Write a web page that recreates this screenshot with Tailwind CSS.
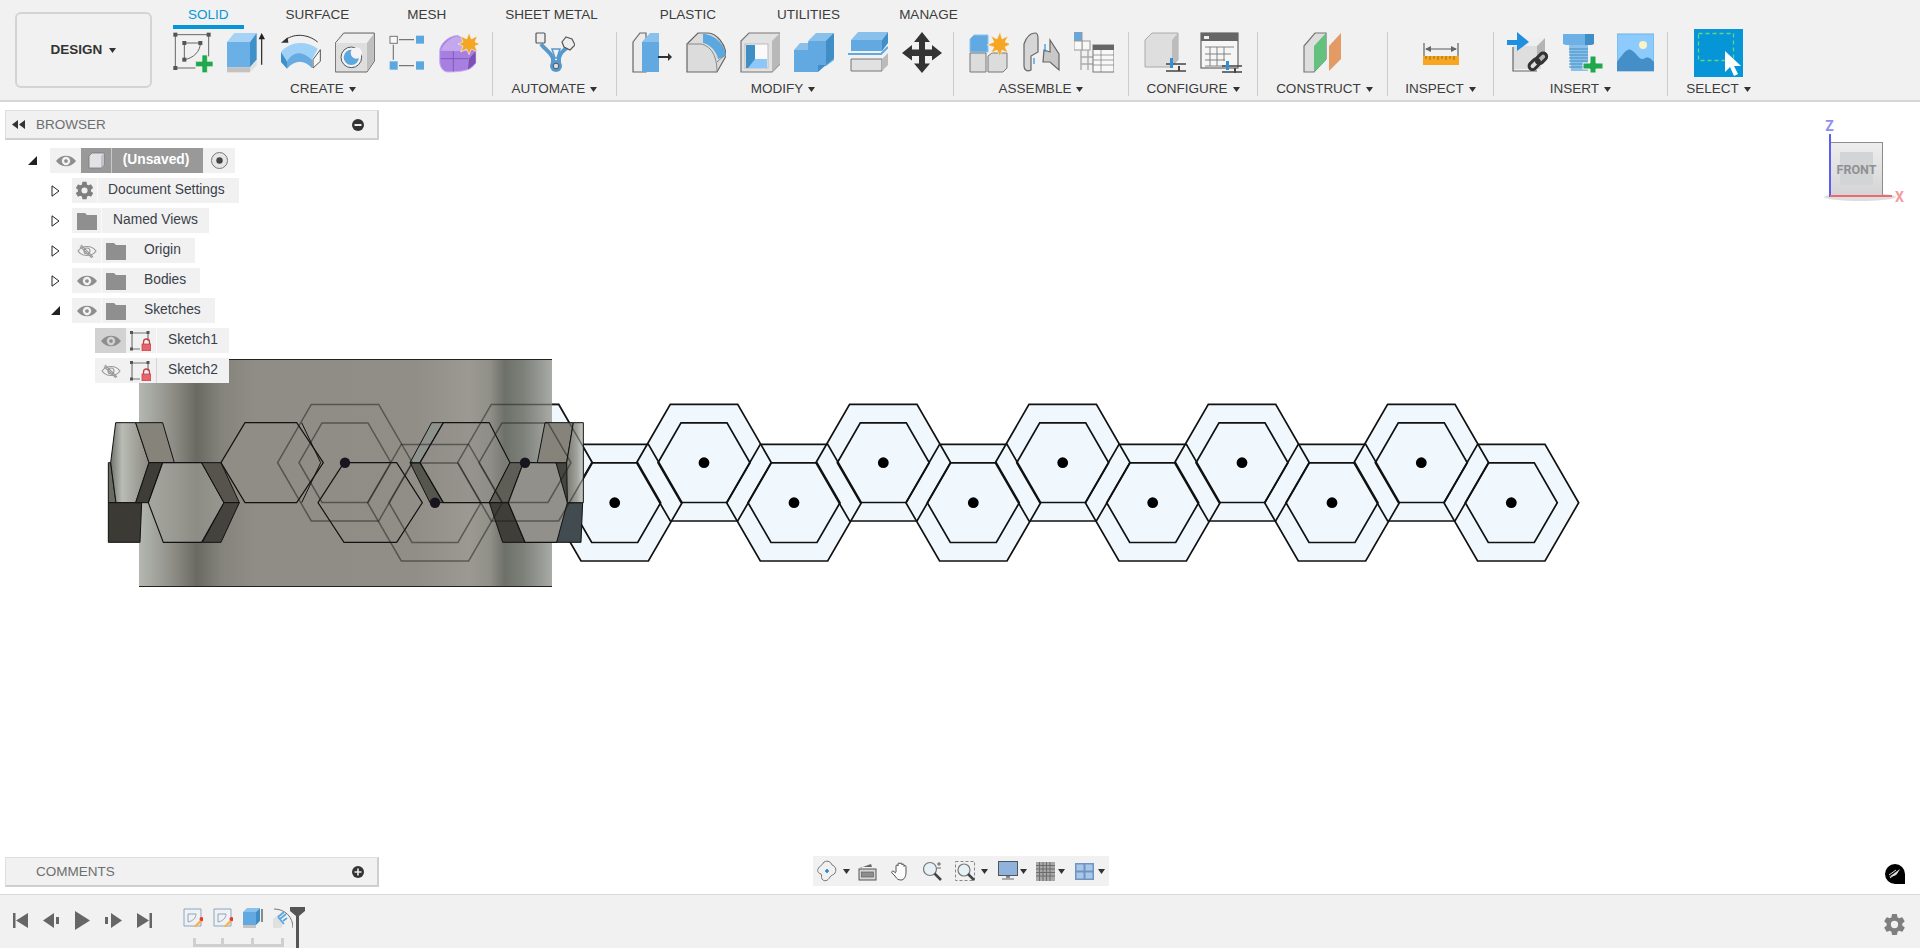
<!DOCTYPE html>
<html>
<head>
<meta charset="utf-8">
<script src="https://cdn.jsdelivr.net/npm/@tailwindcss/browser@4"></script>
</head>
<body class="bg-white overflow-hidden">
<svg width="0" height="0" class="absolute">
  <defs>
    <path id="caret" d="M0 0h7L3.5 5z" fill="#333"/>
    <path id="gear" fill="#7f7f7f" d="M19.4 13c.04-.33.06-.66.06-1s-.02-.67-.06-1l2.11-1.65a.5.5 0 0 0 .12-.64l-2-3.46a.5.5 0 0 0-.61-.22l-2.49 1a7.3 7.3 0 0 0-1.73-1l-.38-2.65A.5.5 0 0 0 14 2h-4a.5.5 0 0 0-.49.42l-.38 2.65c-.62.25-1.2.59-1.73 1l-2.49-1a.5.5 0 0 0-.61.22l-2 3.46a.5.5 0 0 0 .12.64L4.53 11c-.04.33-.06.67-.06 1s.02.67.06 1l-2.11 1.65a.5.5 0 0 0-.12.64l2 3.46c.12.22.39.3.61.22l2.49-1c.53.41 1.11.75 1.73 1l.38 2.65c.04.24.25.42.49.42h4c.24 0 .45-.18.49-.42l.38-2.65c.62-.25 1.2-.59 1.73-1l2.49 1c.22.08.49 0 .61-.22l2-3.46a.5.5 0 0 0-.12-.64ZM12 15.5a3.5 3.5 0 1 1 0-7 3.5 3.5 0 0 1 0 7Z"/>
    <path id="eye" d="M0 7C5 0 15 0 20 7C15 14 5 14 0 7Z M10 2.8a4.2 4.2 0 1 0 .01 0Z M10 5.2a1.8 1.8 0 1 1-.01 0Z" fill="#8e8e8e" fill-rule="evenodd"/>
    <g id="eyeoff" fill="none" stroke="#999" stroke-width="1.1"><path d="M1 7C5 1 15 1 19 7C15 13 5 13 1 7Z"/><circle cx="10" cy="7" r="3"/><path d="M4 1L16 13M3 2.5L15 14"/></g>
    <path id="folder" d="M0 1h8l2 2h10v15H0Z" fill="#8f8f8f"/>
    <g id="sklock"><path d="M2 2h16M2 2v16M2 18h8M18 2v8" fill="none" stroke="#777" stroke-width="1.2"/><rect x="0" y="0" width="3" height="3" fill="#555"/><rect x="16.5" y="0" width="3" height="3" fill="#555"/><rect x="0" y="16.5" width="3" height="3" fill="#555"/><path d="M13.5 13v-2a3 3 0 0 1 6 0v2" fill="none" stroke="#c0404a" stroke-width="1.3"/><rect x="12" y="13" width="9" height="7" fill="#e4656e" stroke="#bc3a45" stroke-width=".7"/></g>
    <polygon id="ho" points="-67.4,0 -33.7,-58.3 33.7,-58.3 67.4,0 33.7,58.3 -33.7,58.3"/>
    <polygon id="hi" points="-46,0 -23,-39.8 23,-39.8 46,0 23,39.8 -23,39.8"/>
    <linearGradient id="bodyg" x1="0" x2="1" y1="0" y2="0">
      <stop offset="0" stop-color="#b4b8b1"/><stop offset=".04" stop-color="#a2a39d"/><stop offset=".08" stop-color="#8f8f88"/><stop offset=".14" stop-color="#6b6a62"/><stop offset=".2" stop-color="#85847c"/><stop offset=".28" stop-color="#8f8d86"/><stop offset=".5" stop-color="#8f8d85"/><stop offset=".67" stop-color="#908e86"/><stop offset=".8" stop-color="#9b9992"/><stop offset=".85" stop-color="#908f88"/><stop offset=".885" stop-color="#6e706a"/><stop offset=".93" stop-color="#7d7f79"/><stop offset="1" stop-color="#a8aba6"/>
    </linearGradient>
    <linearGradient id="lt" x1="0" x2="1" y1="0" y2="0"><stop offset="0" stop-color="#71726c"/><stop offset=".3" stop-color="#b9bcb5"/><stop offset="1" stop-color="#8b8a82"/></linearGradient>
    <linearGradient id="rt" x1="0" x2="1" y1="0" y2="0"><stop offset="0" stop-color="#7b7a72"/><stop offset=".6" stop-color="#9fa29b"/><stop offset="1" stop-color="#c8ccc7"/></linearGradient>
    <linearGradient id="gface" x1="0" x2="0" y1="0" y2="1"><stop offset="0" stop-color="#eeeeee"/><stop offset="1" stop-color="#d4d4d6"/></linearGradient>
    <clipPath id="outside"><rect x="552" y="102" width="1400" height="800"/></clipPath>
  </defs>
</svg>

<div class="flex flex-col h-[948px] w-[1920px] font-['Liberation_Sans',Arial,sans-serif] text-[13.5px] text-[#3c3c3c]">

  <!-- RIBBON -->
  <header class="relative h-[102px] shrink-0 bg-[#f1f1f1] border-b-2 border-[#d6d6d6] flex">
    <div class="w-[159px] shrink-0 pl-[15px] pt-[12px]">
      <button class="w-[137px] h-[76px] rounded-md border-2 border-[#d4d4d4] flex items-center justify-center gap-[7px] font-bold text-[#333]">DESIGN <svg class="w-[7px] h-[5px]"><use href="#caret"/></svg></button>
    </div>
    <div class="flex-1 flex flex-col">
      <nav class="flex h-[32px] shrink-0">
        <a class="mx-[14px] px-[15px] h-[29px] pt-[5px] text-[#0696d7] border-b-[4px] border-[#0696d7]">SOLID</a>
        <a class="ml-[13px] mr-[14px] px-[15px] h-[29px] pt-[5px]">SURFACE</a>
        <a class="mx-[14px] px-[15px] h-[29px] pt-[5px]">MESH</a>
        <a class="ml-[15px] mr-[16px] px-[15px] h-[29px] pt-[5px]">SHEET METAL</a>
        <a class="ml-[16px] mr-[15px] px-[15px] h-[29px] pt-[5px]">PLASTIC</a>
        <a class="ml-[16px] mr-[15px] px-[15px] h-[29px] pt-[5px]">UTILITIES</a>
        <a class="mx-[14px] px-[15px] h-[29px] pt-[5px]">MANAGE</a>
      </nav>
      <div class="flex h-[64px]">

        <!-- CREATE -->
        <section class="w-[333px] flex flex-col items-center">
          <div class="flex gap-[14px] h-[41px]">
            <svg class="w-10 h-[41px]" viewBox="18 12 120 123"><g fill="none" stroke="#666" stroke-width="3"><path d="M25 20H125M25 20V120M25 120H85M125 20V85"/><path d="M52 45H100M52 45V95M52 95C80 90 100 70 100 45" stroke-width="3"/></g><g fill="#555"><rect x="19" y="14" width="12" height="12"/><rect x="119" y="14" width="12" height="12"/><rect x="19" y="114" width="12" height="12"/><rect x="46" y="39" width="12" height="12"/><rect x="94" y="39" width="12" height="12"/><rect x="46" y="89" width="12" height="12"/></g><path d="M86 100H105V81H121V100H138V116H121V134H105V116H86Z" fill="#1fa84d" stroke="#f1f1f1" stroke-width="2"/></svg>
            <svg class="w-10 h-[41px]" viewBox="183 12 120 123"><path d="M183 42H252V118H183Z" fill="#6aafe6"/><path d="M183 42L205 15H272L252 42Z" fill="#a5d2f5"/><path d="M252 42L272 15V95L252 118Z" fill="#3f8fc8"/><path d="M183 118H252V133H183Z" fill="#c2c2c2"/><path d="M252 118L272 95V112L252 133Z" fill="#e0e0e0"/><path d="M287 110V30" stroke="#222" stroke-width="3.5"/><path d="M278 34L287 15L297 34Z" fill="#222"/></svg>
            <svg class="w-10 h-[41px]" viewBox="342 12 120 123"><path d="M342 72C370 38 420 38 452 62L435 95C405 68 380 68 360 100Z" fill="#9dd1f8"/><path d="M360 100C380 68 405 68 435 95V120C410 95 385 95 360 122Z" fill="#66ace2"/><path d="M342 72L360 100V122L342 102Z" fill="#3f8fc6"/><path d="M438 95L460 65V100L438 120Z" fill="#f7f7f7" stroke="#555" stroke-width="3"/><path d="M352 38C378 16 420 16 452 42" fill="none" stroke="#333" stroke-width="3"/><path d="M342 44L362 28L364 44Z" fill="#333"/></svg>
            <svg class="w-10 h-[41px]" viewBox="504 12 120 123"><path d="M505 45L530 15H622V100L600 132H505Z" fill="#dedede" stroke="#666" stroke-width="3"/><path d="M507 45L532 18H620L600 45Z" fill="#efefef"/><path d="M600 45L620 18V100L600 130Z" fill="#bfbfbf"/><circle cx="553" cy="88" r="31" fill="#f4f4f4" stroke="#555" stroke-width="3"/><circle cx="553" cy="88" r="23" fill="#5ba7e0"/><circle cx="568" cy="75" r="17" fill="#f4f4f4"/></svg>
            <svg class="w-9 h-[41px]" viewBox="663 12 108 123"><g stroke="#777" stroke-width="3.5"><path d="M693 35H738M693 113H738M676 50V95"/></g><rect x="666" y="25" width="22" height="21" fill="#f8f8f8" stroke="#777" stroke-width="3"/><rect x="744" y="23" width="24" height="24" fill="#5ba7e0"/><rect x="665" y="100" width="24" height="25" fill="#5ba7e0"/><rect x="744" y="100" width="24" height="25" fill="#5ba7e0"/></svg>
            <svg class="w-10 h-[41px]" viewBox="825 12 120 123"><path d="M827 70C827 50 850 25 880 22L915 40L935 70V105C925 125 900 132 850 132C835 130 827 115 827 100Z" fill="#a77fe0" stroke="#c9b0f0" stroke-width="3"/><path d="M830 68C840 45 860 28 880 25L912 42L915 70Z" fill="#c4a8ee"/><path d="M915 92L935 70V105L912 125Z" fill="#7a52b5"/><path d="M830 92H912M868 70V130" stroke="#7a52b5" stroke-width="2.5"/><path d="M915 14L922 33L940 24L933 42L948 48L933 54L940 72L922 63L915 80L908 63L890 72L897 54L882 48L897 42L890 24L908 33Z" fill="#f5a623" stroke="#f1f1f1" stroke-width="2"/></svg>
          </div>
          <div class="mt-[8px] -ml-[5px] flex items-center gap-[5px] leading-4">CREATE <svg class="w-[7px] h-[5px]"><use href="#caret"/></svg></div>
        </section>

        <!-- AUTOMATE -->
        <section class="w-[124px] border-l border-[#cbcbcb] flex flex-col items-center">
          <div class="flex h-[41px]">
            <svg class="w-10 h-[41px]" viewBox="0 0 40 41"><path d="M6 12C10 18 14 18 18 26V32H24V26C26 18 30 18 34 14" fill="none" stroke="#5799cb" stroke-width="4"/><path d="M17 17h8l-3 9h-2z" fill="#f1f1f1" stroke="#5799cb" stroke-width="1.5"/><circle cx="21" cy="34" r="6" fill="#5799cb"/><circle cx="21" cy="34" r="2.8" fill="#ddd" stroke="#456" stroke-width="1"/><rect x="1" y="1" width="9" height="10" rx="1" fill="#eee" stroke="#555" stroke-width="1.2"/><path d="M31 5l6 2 3 6-5 5-6-3-2-5z" fill="#eee" stroke="#555" stroke-width="1.2"/></svg>
          </div>
          <div class="mt-[8px] flex items-center gap-[5px] leading-4">AUTOMATE <svg class="w-[7px] h-[5px]"><use href="#caret"/></svg></div>
        </section>

        <!-- MODIFY -->
        <section class="w-[337px] border-l border-[#cbcbcb] flex flex-col items-center pl-[3px]">
          <div class="flex gap-[14px] h-[41px]">
            <svg class="w-10 h-[41px]" viewBox="0 0 40 41"><path d="M1 10L8 1h6v39H1Z" fill="#ececec" stroke="#666" stroke-width="1.2"/><path d="M10 10h17v30H10Z" fill="#62a9e2"/><path d="M10 10l8-9h9v9Z" fill="#8ac1ec"/><path d="M26 24h10v-3l4 4-4 4v-3H26z" fill="#333"/></svg>
            <svg class="w-10 h-[41px]" viewBox="0 0 40 41"><path d="M1 12L12 1h10C30 1 40 12 40 24L31 40H1Z" fill="#dcdcdc" stroke="#666" stroke-width="1.2"/><path d="M17 2C28 2 39 12 40 24L32 27C31 20 24 12 17 11Z" fill="#5ba7e0"/><path d="M1 12h14C24 14 31 22 31 40M31 30l9-8" fill="none" stroke="#888" stroke-width="1"/></svg>
            <svg class="w-10 h-[41px]" viewBox="0 0 40 41"><path d="M1 9L9 1h31v31l-8 8H1Z" fill="#e2e2e2" stroke="#777" stroke-width="1.2"/><path d="M32 9l8-8v31l-8 8Z" fill="#b9b9b9"/><rect x="5" y="12" width="23" height="24" fill="#fafafa" stroke="#bbb" stroke-width="1"/><path d="M6 13h9v14H27V36H6Z" fill="#3f8fc6"/><path d="M15 27h12v9H8Z" fill="#8cc7f7"/></svg>
            <svg class="w-10 h-[41px]" viewBox="0 0 40 41"><path d="M0 18h14V10l8-8h18v26l-8 6h-8v6H0Z" fill="#62a9e2"/><path d="M14 9l8-8h18l-8 8Z" fill="#8ac1ec"/><path d="M0 18l6-7h8v7Z" fill="#8ac1ec"/><path d="M32 9l8-8v25l-8 7Z" fill="#3f8fc6"/><path d="M24 33h8l-8 7Z" fill="#3f8fc6"/></svg>
            <svg class="w-10 h-[41px]" viewBox="0 0 40 41"><path d="M3 8h31v11H3Z" fill="#62a9e2"/><path d="M3 8l7-8h30l-6 8Z" fill="#8ac1ec"/><path d="M34 8l6-8v11l-6 8Z" fill="#3f8fc6"/><path d="M0 22h33l7-7" fill="none" stroke="#62a9e2" stroke-width="2.2"/><path d="M3 27h31v12H3Z" fill="#e1e1e1" stroke="#777" stroke-width="1"/><path d="M34 27l6-6v12l-6 6Z" fill="#bbb"/></svg>
            <svg class="w-10 h-[41px]" viewBox="0 0 40 41"><path d="M20 0l8 10h-5v7.5h7V13l10 8-10 7.5V24h-7v7.5h5L20 41l-8-9.5h5V24h-7v4.5L0 21l10-8v4.5h7V10h-5z" fill="#333"/></svg>
          </div>
          <div class="mt-[8px] -ml-[7px] flex items-center gap-[5px] leading-4">MODIFY <svg class="w-[7px] h-[5px]"><use href="#caret"/></svg></div>
        </section>

        <!-- ASSEMBLE -->
        <section class="w-[175px] border-l border-[#cbcbcb] flex flex-col items-center">
          <div class="flex gap-[14px] h-[41px]">
            <svg class="w-10 h-[41px]" viewBox="0 0 40 41"><path d="M1 7L5 3h14v17H1Z" fill="#62a9e2" stroke="#8ac1ec"/><path d="M1 21h16v19H1Z" fill="#dcdcdc" stroke="#777"/><path d="M19 24l4-3h15v15l-4 4H19Z" fill="#dcdcdc" stroke="#777"/><path d="M31 0l2 7 6-3-3 6 6 2-6 3 3 6-6-3-2 7-3-7-6 3 3-6-7-2 7-3-3-6 6 3z" fill="#f5a623" stroke="#f1f1f1" stroke-width=".6"/></svg>
            <svg class="w-[37px] h-[41px]" viewBox="0 0 37 41"><path d="M1 12C3 6 7 1 12 1c2 0 3 2 3 5v14L8 24v14C4 40 1 38 1 34Z" fill="#d6d6d6" stroke="#666" stroke-width="1.2"/><path d="M21 18l6 2V8l9 14v16L27 30H20Z" fill="#c8c8c8" stroke="#666" stroke-width="1.2"/><path d="M11 26v6M22 12v8" stroke="#2f8fd8" stroke-width="1.2"/></svg>
            <svg class="w-10 h-[41px]" viewBox="0 0 40 41"><rect x="0" y="0" width="8" height="9" fill="#62a9e2" stroke="#999"/><rect x="8" y="9" width="8" height="9" fill="#f8f8f8" stroke="#999"/><rect x="0" y="9" width="8" height="9" fill="#f8f8f8" stroke="#999"/><path d="M7 18v20M14 18v20M7 25h13M7 32h13" stroke="#aaa" stroke-width="1.4" fill="none"/><rect x="19" y="13" width="21" height="27" fill="#f8f8f8" stroke="#777"/><rect x="19" y="13" width="21" height="5" fill="#666"/><path d="M19 23h21M19 28h21M19 33h21M27 18v22" stroke="#888" stroke-width=".8"/></svg>
          </div>
          <div class="mt-[8px] flex items-center gap-[5px] leading-4">ASSEMBLE <svg class="w-[7px] h-[5px]"><use href="#caret"/></svg></div>
        </section>

        <!-- CONFIGURE -->
        <section class="w-[129px] border-l border-[#cbcbcb] flex flex-col items-center">
          <div class="flex gap-[14px] h-[41px]">
            <svg class="w-[42px] h-[41px]" viewBox="0 0 42 41"><path d="M1 8L8 1h26v27l-8 7H1Z" fill="#dedede" stroke="#aaa"/><path d="M28 8l6-7v27l-6 7Z" fill="#bcbcbc"/><path d="M22 32h20M22 39h20" stroke="#444" stroke-width="1.6"/><rect x="26" y="26" width="3" height="10" fill="#2f8fd8"/><path d="M35 34v5" stroke="#444" stroke-width="2"/></svg>
            <svg class="w-[42px] h-[41px]" viewBox="0 0 42 41"><rect x="1" y="1" width="37" height="35" fill="#f6f6f6" stroke="#666" stroke-width="1.2"/><rect x="1" y="1" width="37" height="8" fill="#666"/><rect x="4" y="4" width="5" height="3" fill="#eee"/><path d="M5 15h29M5 22h26M5 28h20M5 34h20M10 15v19M17 15v19M24 15v14" stroke="#777" stroke-width=".9" fill="none"/><path d="M22 34h20M22 40h20" stroke="#444" stroke-width="1.6"/><rect x="26" y="29" width="3" height="9" fill="#2f8fd8"/><path d="M35 36v5" stroke="#444" stroke-width="2"/></svg>
          </div>
          <div class="mt-[8px] flex items-center gap-[5px] leading-4">CONFIGURE <svg class="w-[7px] h-[5px]"><use href="#caret"/></svg></div>
        </section>

        <!-- CONSTRUCT -->
        <section class="w-[130px] border-l border-[#cbcbcb] flex flex-col items-center">
          <div class="flex h-[41px]">
            <svg class="w-10 h-[41px]" viewBox="0 0 40 41"><path d="M1 14L12 1h11v26L11 40H1Z" fill="#dedede" stroke="#777" stroke-width="1.2"/><path d="M11 14L23 1v27L11 40Z" fill="#64c17e"/><path d="M26 14L38 1v26L26 39Z" fill="#e49a64"/></svg>
          </div>
          <div class="mt-[8px] ml-[4px] flex items-center gap-[5px] leading-4">CONSTRUCT <svg class="w-[7px] h-[5px]"><use href="#caret"/></svg></div>
        </section>

        <!-- INSPECT -->
        <section class="w-[106px] border-l border-[#cbcbcb] flex flex-col items-center">
          <div class="flex h-[41px]">
            <svg class="w-[36px] h-[41px]" viewBox="0 0 36 41"><path d="M1 11v13M35 11v13" stroke="#555" stroke-width="1.1"/><path d="M3 17h30" stroke="#666" stroke-width="1.1"/><path d="M2 17l6-3v6zM34 17l-6-3v6z" fill="#666"/><rect x="0" y="24" width="36" height="9" fill="#f5a623"/><path d="M3 24v3M7 24v4M11 24v3M15 24v4M19 24v3M23 24v4M27 24v3M31 24v4" stroke="#8a5a10" stroke-width=".8"/></svg>
          </div>
          <div class="mt-[8px] flex items-center gap-[5px] leading-4">INSPECT <svg class="w-[7px] h-[5px]"><use href="#caret"/></svg></div>
        </section>

        <!-- INSERT -->
        <section class="w-[174px] border-l border-[#cbcbcb] flex flex-col items-center">
          <div class="flex gap-[14px] h-[41px]">
            <svg class="w-[42px] h-[41px]" viewBox="0 0 42 41"><path d="M6 13h28v24H6Z" fill="#dedede"/><path d="M6 15v24h24" fill="none" stroke="#666" stroke-width="1.2"/><path d="M14 6h24L30 14H6Z" fill="#efefef"/><path d="M30 14l8-8v22l-8 8Z" fill="#b5b5b5"/><path d="M0 8h10V0l12 10-12 9v-6H0z" fill="#1f90e0"/><g fill="none" stroke="#333" stroke-width="3"><rect x="21" y="29" width="12" height="7" rx="3.5" transform="rotate(-45 27 32)"/><rect x="28" y="23" width="12" height="7" rx="3.5" transform="rotate(-45 34 26)"/></g></svg>
            <svg class="w-10 h-[41px]" viewBox="0 0 40 41"><path d="M0 2h31v10l-3 1H3l-3-1Z" fill="#6cb0e5"/><path d="M22 2h9v10l-3 1h-6Z" fill="#3f8fc6"/><path d="M6 13h19v26H8Z" fill="#8cc0e8"/><path d="M6 17h19M6 20h19M6 23h19M6 26h19M6 29h19M6 32h19M6 35h19" stroke="#3f8fc6" stroke-width="1.1"/><path d="M20 31h7v-7h6v7h7v6h-7v4h-6v-4h-7z" fill="#1fa84d" stroke="#f1f1f1" stroke-width="1"/></svg>
            <svg class="w-[37px] h-[41px]" viewBox="0 0 37 41"><rect width="37" height="37" y="2" fill="#8ccbfb" stroke="#6fb1e3"/><circle cx="26" cy="13" r="4" fill="#fbf4c6"/><path d="M0 30C6 22 10 16 14 18C19 20 22 28 26 27C30 25 32 24 37 30V39H0Z" fill="#458fc9"/></svg>
          </div>
          <div class="mt-[8px] flex items-center gap-[5px] leading-4">INSERT <svg class="w-[7px] h-[5px]"><use href="#caret"/></svg></div>
        </section>

        <!-- SELECT -->
        <section class="w-[102px] border-l border-[#cbcbcb] flex flex-col items-center">
          <div class="flex h-[41px] items-center">
            <svg class="w-[49px] h-[48px] shrink-0" viewBox="0 0 49 48"><rect width="49" height="48" fill="#0696d7"/><rect x="4.5" y="4.5" width="35" height="27" fill="none" stroke="#63d38a" stroke-width="1.3" stroke-dasharray="4 3"/><path d="M31 22v21l5-5 4 9 4-2-4-8h7Z" fill="#fff"/></svg>
          </div>
          <div class="mt-[8px] flex items-center gap-[5px] leading-4">SELECT <svg class="w-[7px] h-[5px]"><use href="#caret"/></svg></div>
        </section>
      </div>
    </div>
  </header>

  <!-- CANVAS -->
  <main class="relative flex-1">
    <svg class="absolute inset-0 w-full h-full" viewBox="0 102 1920 792">
      <!-- blue fills -->
      <g fill="#f0f8fe">
        <use href="#ho" x="525" y="462.7"/><use href="#ho" x="614.7" y="502.7"/><use href="#ho" x="704" y="462.7"/><use href="#ho" x="794" y="502.7"/><use href="#ho" x="883.3" y="462.7"/><use href="#ho" x="973.3" y="502.7"/><use href="#ho" x="1062.7" y="462.7"/><use href="#ho" x="1152.7" y="502.7"/><use href="#ho" x="1242" y="462.7"/><use href="#ho" x="1332" y="502.7"/><use href="#ho" x="1421.3" y="462.7"/><use href="#ho" x="1511.3" y="502.7"/>
      </g>
      <g fill="none" stroke="#111" stroke-width="1.7">
        <use href="#ho" x="614.7" y="502.7"/><use href="#hi" x="614.7" y="502.7"/><use href="#ho" x="704" y="462.7"/><use href="#hi" x="704" y="462.7"/><use href="#ho" x="794" y="502.7"/><use href="#hi" x="794" y="502.7"/><use href="#ho" x="883.3" y="462.7"/><use href="#hi" x="883.3" y="462.7"/><use href="#ho" x="973.3" y="502.7"/><use href="#hi" x="973.3" y="502.7"/><use href="#ho" x="1062.7" y="462.7"/><use href="#hi" x="1062.7" y="462.7"/><use href="#ho" x="1152.7" y="502.7"/><use href="#hi" x="1152.7" y="502.7"/><use href="#ho" x="1242" y="462.7"/><use href="#hi" x="1242" y="462.7"/><use href="#ho" x="1332" y="502.7"/><use href="#hi" x="1332" y="502.7"/><use href="#ho" x="1421.3" y="462.7"/><use href="#hi" x="1421.3" y="462.7"/><use href="#ho" x="1511.3" y="502.7"/><use href="#hi" x="1511.3" y="502.7"/>
        <g clip-path="url(#outside)"><use href="#ho" x="525" y="462.7"/><use href="#hi" x="525" y="462.7"/></g>
      </g>
      <g fill="#000">
        <circle cx="614.7" cy="502.7" r="5.4"/><circle cx="704" cy="462.7" r="5.4"/><circle cx="794" cy="502.7" r="5.4"/><circle cx="883.3" cy="462.7" r="5.4"/><circle cx="973.3" cy="502.7" r="5.4"/><circle cx="1062.7" cy="462.7" r="5.4"/><circle cx="1152.7" cy="502.7" r="5.4"/><circle cx="1242" cy="462.7" r="5.4"/><circle cx="1332" cy="502.7" r="5.4"/><circle cx="1421.3" cy="462.7" r="5.4"/><circle cx="1511.3" cy="502.7" r="5.4"/>
      </g>
      <!-- body -->
      <rect x="139" y="359" width="413" height="228" fill="url(#bodyg)"/>
      <path d="M139 359.5H552M139 586.5H552" stroke="#222" stroke-width="1.2"/>
      <g transform="translate(90 350) scale(.33333)" stroke-linejoin="round">
        <polygon points="55,338 62,338 78,458 55,458" fill="#6a6962" stroke="#111" stroke-width="3"/>
        <polygon points="77,218 137,218 177,338 137,458 78,458 62,338" fill="url(#lt)" stroke="#111" stroke-width="3"/>
        <polygon points="137,218 218,218 253,338 177,338" fill="#86837b" stroke="#111" stroke-width="3"/>
        <polygon points="55,458 155,458 150,577 55,577" fill="#3b3a35" stroke="#111" stroke-width="3"/>
        <polygon points="177,338 218,338 175,458 137,458" fill="#3e3d38" stroke="#111" stroke-width="3"/>
        <polygon points="218,338 335,338 402,458 335,577 220,577 175,458" fill="#a3a39c" fill-opacity=".6" stroke="#111" stroke-width="3.5"/>
        <polygon points="335,338 393,338 448,458 402,458" fill="#56544d" stroke="#111" stroke-width="3"/>
        <polygon points="402,458 448,458 393,577 337,577" fill="#45433d" stroke="#111" stroke-width="3"/>
        <polygon points="465,218 620,218 700,338 620,458 465,458 393,338" fill="#8f8d86" stroke="#111" stroke-width="3.5"/>
        <path d="M635,218 L692,338 L635,458" fill="none" stroke="#111" stroke-width="3"/>
        <polygon points="960,338 990,338 1060,458 1020,458" fill="#55574f" stroke="#111" stroke-width="3"/>
        <polygon points="1025,218 1060,218 990,338 960,338" fill="#8d928c" stroke="#111" stroke-width="3"/>
        <polygon points="1060,218 1198,218 1260,338 1198,458 1060,458 990,338" fill="#8e8d86" fill-opacity=".4" stroke="#111" stroke-width="3.5"/>
        <polygon points="762,338 920,338 997,458 920,577 762,577 684,458" fill="#8f8e87" fill-opacity=".55" stroke="#111" stroke-width="3.5"/>
        <polygon points="1260,338 1300,338 1255,458 1198,458" fill="#5e5d56" stroke="#111" stroke-width="3"/>
        <polygon points="1198,458 1255,458 1305,577 1238,577" fill="#3f3e39" stroke="#111" stroke-width="3"/>
        <polygon points="1300,338 1398,338 1468,458 1400,577 1305,577 1255,458" fill="#92908a" stroke="#111" stroke-width="3.5"/>
        <polygon points="1432,458 1478,458 1473,577 1400,577" fill="#424b4f" stroke="#111" stroke-width="3"/>
        <polygon points="1398,338 1430,338 1450,458 1432,458" fill="#454640" stroke="#111" stroke-width="3"/>
        <polygon points="1365,218 1450,218 1430,338 1342,338" fill="#86837b" stroke="#111" stroke-width="3"/>
        <polygon points="1450,218 1480,218 1480,458 1432,458 1430,338" fill="url(#rt)" stroke="#111" stroke-width="3"/>
      </g>
      <!-- ghost outlines -->
      <g fill="none" stroke="#1c1c1c" stroke-opacity=".5" stroke-width="1.5">
        <use href="#ho" x="345" y="462.7"/><use href="#hi" x="345" y="462.7"/>
        <use href="#ho" x="435" y="502.7"/><use href="#hi" x="435" y="502.7"/>
        <use href="#ho" x="525" y="462.7"/><use href="#hi" x="525" y="462.7"/>
      </g>
      <g fill="#17141e"><circle cx="345" cy="462.7" r="5.2"/><circle cx="435" cy="502.7" r="5.2"/><circle cx="525" cy="462.7" r="5.2"/></g>

      <!-- view cube -->
      <ellipse cx="1860" cy="197" rx="36" ry="4" fill="#000" opacity=".13"/>
      <rect x="1830.5" y="142.5" width="52" height="53" fill="url(#gface)" stroke="#8c8c8c" stroke-width="1"/>
      <rect x="1840" y="152" width="33" height="33" fill="#d3d4d6"/>
      <text x="1856.5" y="174" text-anchor="middle" font-family="Roboto,sans-serif" font-weight="700" font-size="12.5" fill="#8f9093">FRONT</text>
      <path d="M1830 134V197" stroke="#5b5ef0" stroke-width="2"/>
      <path d="M1830 196H1892" stroke="#ea6a72" stroke-width="2.2"/>
      <text x="1829.5" y="131" text-anchor="middle" font-family="Roboto,sans-serif" font-weight="700" font-size="14" fill="#8d8ff5">Z</text>
      <text x="1899.5" y="202" text-anchor="middle" font-family="Roboto,sans-serif" font-weight="700" font-size="14" fill="#f29ba0">X</text>
      <!-- notice badge -->
      <path d="M1895 864a10 10 0 0 1 10 10v10h-10a10 10 0 0 1 0-20Z" fill="#000"/>
      <path d="M1889 877l11-8-1 2-1 1-1 2-1 1-2 1Z" fill="#ddd"/>
      <path d="M1889 875l7-5M1890 878l8-6" stroke="#ddd" stroke-width="1"/>
    </svg>

    <!-- browser panel -->
    <aside class="absolute left-[5px] top-[8px] w-[374px]">
      <div class="h-[30px] bg-[#f1f1f1] border border-[#dedede] border-r-2 border-b-2 border-r-[#cfcfcf] border-b-[#cfcfcf] flex items-center pl-[6px] pr-[13px] text-[#6e6e6e]">
        <svg class="w-[14px] h-[9px] mr-[8px]" viewBox="0 0 14 9"><path d="M0 4.5L6 0v9zM7 4.5L13 0v9z" fill="#333"/></svg>
        <span class="ml-[2px] mt-[2px] flex-1">BROWSER</span>
        <svg class="w-[12px] h-[12px]" viewBox="0 0 12 12"><circle cx="6" cy="6" r="6" fill="#333"/><rect x="2.5" y="5" width="7" height="2" fill="#eee"/></svg>
      </div>
      <ul class="mt-[8px] flex flex-col gap-[5px] text-[#3a3f4a] text-[13.8px]">
        <li class="flex items-center h-[25px]">
          <svg class="w-[9px] h-[9px] ml-[23px] mr-[13px]" viewBox="0 0 9 9"><path d="M9 0v9H0Z" fill="#222"/></svg>
          <div class="flex items-stretch h-full bg-[#f1f1f1]">
            <div class="w-[31px] flex items-center justify-center"><svg class="w-[20px] h-[14px]" viewBox="0 0 20 14"><use href="#eye"/></svg></div>
            <div class="w-[31px] bg-[#999] border-r border-[#c9c9c9] flex items-center justify-center"><svg class="w-[17px] h-[17px]" viewBox="0 0 17 17"><path d="M1 4l3-3h12v12l-3 3H1Z" fill="#e2e2e6" stroke="#777" stroke-width=".8"/><path d="M13 4l3-3v12l-3 3Z" fill="#c2c3c8"/></svg></div>
            <div class="w-[91px] pr-[3px] bg-[#999] flex items-center justify-center text-white font-bold">(Unsaved)</div>
            <div class="w-[32px] flex items-center justify-center"><svg class="w-[17px] h-[17px]" viewBox="0 0 17 17"><circle cx="8.5" cy="8.5" r="8" fill="#e6e6e6" stroke="#777"/><circle cx="8.5" cy="8.5" r="3.2" fill="#444"/></svg></div>
          </div>
        </li>
        <li class="flex items-center h-[25px]">
          <svg class="w-[9px] h-[12px] ml-[46px] mr-[12px]" viewBox="0 0 9 12"><path d="M1 .8L8 6 1 11.2Z" fill="#fff" stroke="#222" stroke-width="1"/></svg>
          <div class="flex items-stretch h-full bg-[#f1f1f1]">
            <div class="w-[26px] border-r border-[#fafafa] flex items-center justify-center"><svg class="w-[21px] h-[21px]" viewBox="0 0 24 24"><use href="#gear"/></svg></div>
            <div class="w-[141px] pl-[10px] flex items-center">Document Settings</div>
          </div>
        </li>
        <li class="flex items-center h-[25px]">
          <svg class="w-[9px] h-[12px] ml-[46px] mr-[12px]" viewBox="0 0 9 12"><path d="M1 .8L8 6 1 11.2Z" fill="#fff" stroke="#222" stroke-width="1"/></svg>
          <div class="flex items-stretch h-full bg-[#f1f1f1]">
            <div class="w-[30px] border-r border-[#fafafa] flex items-center justify-center"><svg class="w-[20px] h-[18px]" viewBox="0 0 20 18"><use href="#folder"/></svg></div>
            <div class="w-[107px] pl-[11px] flex items-center">Named Views</div>
          </div>
        </li>
        <li class="flex items-center h-[25px]">
          <svg class="w-[9px] h-[12px] ml-[46px] mr-[12px]" viewBox="0 0 9 12"><path d="M1 .8L8 6 1 11.2Z" fill="#fff" stroke="#222" stroke-width="1"/></svg>
          <div class="flex items-stretch h-full bg-[#f1f1f1]">
            <div class="w-[30px] border-r border-[#fafafa] flex items-center justify-center"><svg class="w-[20px] h-[14px]" viewBox="0 0 20 14"><use href="#eyeoff"/></svg></div>
            <div class="w-[93px] pl-[4px] flex items-center"><svg class="w-[20px] h-[18px] mr-[18px]" viewBox="0 0 20 18"><use href="#folder"/></svg>Origin</div>
          </div>
        </li>
        <li class="flex items-center h-[25px]">
          <svg class="w-[9px] h-[12px] ml-[46px] mr-[12px]" viewBox="0 0 9 12"><path d="M1 .8L8 6 1 11.2Z" fill="#fff" stroke="#222" stroke-width="1"/></svg>
          <div class="flex items-stretch h-full bg-[#f1f1f1]">
            <div class="w-[30px] border-r border-[#fafafa] flex items-center justify-center"><svg class="w-[20px] h-[14px]" viewBox="0 0 20 14"><use href="#eye"/></svg></div>
            <div class="w-[98px] pl-[4px] flex items-center"><svg class="w-[20px] h-[18px] mr-[18px]" viewBox="0 0 20 18"><use href="#folder"/></svg>Bodies</div>
          </div>
        </li>
        <li class="flex items-center h-[25px]">
          <svg class="w-[9px] h-[9px] ml-[46px] mr-[12px]" viewBox="0 0 9 9"><path d="M9 0v9H0Z" fill="#222"/></svg>
          <div class="flex items-stretch h-full bg-[#f1f1f1]">
            <div class="w-[30px] border-r border-[#fafafa] flex items-center justify-center"><svg class="w-[20px] h-[14px]" viewBox="0 0 20 14"><use href="#eye"/></svg></div>
            <div class="w-[113px] pl-[4px] flex items-center"><svg class="w-[20px] h-[18px] mr-[18px]" viewBox="0 0 20 18"><use href="#folder"/></svg>Sketches</div>
          </div>
        </li>
        <li class="flex items-center h-[25px] pl-[90px]">
          <div class="flex items-stretch h-full bg-[#f1f1f1]">
            <div class="w-[31px] bg-[#d2d2d2] flex items-center justify-center"><svg class="w-[20px] h-[14px]" viewBox="0 0 20 14"><use href="#eye"/></svg></div>
            <div class="w-[31px] border-r border-[#fafafa] pl-[4px] flex items-center"><svg class="w-[21px] h-[20px]" viewBox="0 0 21 20"><use href="#sklock"/></svg></div>
            <div class="w-[72px] pl-[11px] flex items-center">Sketch1</div>
          </div>
        </li>
        <li class="flex items-center h-[25px] pl-[90px]">
          <div class="flex items-stretch h-full bg-[#f1f1f1]">
            <div class="w-[31px] flex items-center justify-center"><svg class="w-[20px] h-[14px]" viewBox="0 0 20 14"><use href="#eyeoff"/></svg></div>
            <div class="w-[31px] border-r border-[#d6d6d6] pl-[4px] flex items-center"><svg class="w-[21px] h-[20px]" viewBox="0 0 21 20"><use href="#sklock"/></svg></div>
            <div class="w-[72px] pl-[11px] flex items-center">Sketch2</div>
          </div>
        </li>
      </ul>
    </aside>

    <!-- comments -->
    <aside class="absolute left-[5px] top-[755px] w-[374px] h-[30px] bg-[#f1f1f1] border border-[#dedede] border-r-2 border-b-2 border-r-[#cfcfcf] border-b-[#cfcfcf] flex items-center pl-[30px] pr-[13px] text-[#6e6e6e]">
      <span class="mt-[2px] flex-1">COMMENTS</span>
      <svg class="w-[12px] h-[12px]" viewBox="0 0 12 12"><circle cx="6" cy="6" r="6" fill="#333"/><path d="M2.5 6h7M6 2.5v7" stroke="#eee" stroke-width="1.6"/></svg>
    </aside>

    <!-- nav bar -->
    <div class="absolute left-[813px] top-[754px] w-[296px] h-[30px] bg-[#f1f1f1] flex items-center pl-[4px]">
      <svg class="w-[20px] h-[22px] mr-[6px]" viewBox="0 0 20 22"><path d="M7 2c4-2 7 0 8 3 3 1 5 4 3 8-1 2-4 2-5 4-2 4-6 5-8 2-1-2 0-4-1-5-3-1-4-3-3-5 1-3 4-3 6-7Z" fill="none" stroke="#777" stroke-width="1"/><path d="M8 11h4M10 9v4" stroke="#1b86d6" stroke-width="1.6"/></svg>
      <svg class="w-[7px] h-[5px] mr-[8px]"><use href="#caret"/></svg>
      <svg class="w-[19px] h-[19px] mr-[13px]" viewBox="0 0 19 19"><rect x="1" y="7" width="17" height="11" fill="#d5d5d5" stroke="#555"/><rect x="3.5" y="10" width="12" height="5" fill="#8e8e8e" stroke="#555" stroke-width=".6"/><path d="M2 6l11-4 1 3H3z" fill="#666"/></svg>
      <svg class="w-[20px] h-[20px] mr-[12px]" viewBox="0 0 20 20"><path d="M6 11V5a1 1 0 0 1 2 0V3a1 1 0 0 1 2 0v0a1 1 0 0 1 2 0v1a1 1 0 0 1 2 0v1.5a1 1 0 0 1 2 0V11c0 5-2 8-5 8s-4-1-6-4l-3-3c-1-1 0-2 1-2l3 2" fill="#fbfbfb" stroke="#555" stroke-width="1"/></svg>
      <svg class="w-[20px] h-[20px] mr-[13px]" viewBox="0 0 20 20"><circle cx="8" cy="8" r="6.5" fill="#e6f1f6" stroke="#777" stroke-width="1.2"/><path d="M12.5 12.5L19 19" stroke="#444" stroke-width="2.5"/><path d="M15 3h4M17 1v4M15 7h4" stroke="#555" stroke-width=".9"/></svg>
      <svg class="w-[20px] h-[20px] mr-[6px]" viewBox="0 0 20 20"><rect x=".5" y=".5" width="19" height="19" fill="none" stroke="#888" stroke-dasharray="3 2"/><circle cx="9" cy="9" r="6" fill="#e6f1f6" stroke="#777" stroke-width="1.2"/><path d="M13 13L19 19" stroke="#444" stroke-width="2.5"/></svg>
      <svg class="w-[7px] h-[5px] mr-[10px]"><use href="#caret"/></svg>
      <svg class="w-[20px] h-[20px] mr-[2px]" viewBox="0 0 20 20"><rect x=".5" y=".5" width="19" height="14" fill="#8fb3dc" stroke="#555"/><rect x="8" y="15" width="4" height="2" fill="#888"/><rect x="4" y="17" width="12" height="2" fill="#aaa"/></svg>
      <svg class="w-[7px] h-[5px] mr-[9px]"><use href="#caret"/></svg>
      <svg class="w-[19px] h-[19px] mr-[3px]" viewBox="0 0 19 19"><rect width="19" height="19" fill="#a8a8a8"/><path d="M0 3.5h19M0 7h19M0 10.5h19M0 14h19M3.5 0v19M7 0v19M10.5 0v19M14 0v19" stroke="#666" stroke-width=".9"/></svg>
      <svg class="w-[7px] h-[5px] mr-[10px]"><use href="#caret"/></svg>
      <svg class="w-[19px] h-[17px] mr-[4px]" viewBox="0 0 19 17"><rect width="19" height="17" fill="#6f94c0"/><rect x="1.5" y="1.5" width="7" height="6" fill="#a9c7e8"/><rect x="10.5" y="1.5" width="7" height="6" fill="#a9c7e8"/><rect x="1.5" y="9.5" width="7" height="6" fill="#a9c7e8"/><rect x="10.5" y="9.5" width="7" height="6" fill="#a9c7e8"/></svg>
      <svg class="w-[7px] h-[5px]"><use href="#caret"/></svg>
    </div>
  </main>

  <!-- TIMELINE -->
  <footer class="relative h-[54px] shrink-0 bg-[#f1f1f1] border-t border-[#d9d9d9] flex items-center pl-[13px]">
    <div class="flex items-center gap-[15px] -mt-[3px]">
      <svg class="w-[15px] h-[15px]" viewBox="0 0 15 15"><path d="M0 0h2.5v15H0zM15 0v15L3 7.5z" fill="#666"/></svg>
      <svg class="w-[17px] h-[15px]" viewBox="0 0 17 15"><path d="M11 0v15L0 7.5zM13 4h3v7h-3z" fill="#666"/></svg>
      <svg class="w-[15px] h-[19px]" viewBox="0 0 15 19"><path d="M0 0l15 9.5L0 19z" fill="#666"/></svg>
      <svg class="w-[17px] h-[15px]" viewBox="0 0 17 15"><path d="M6 0v15l11-7.5zM0 4h3v7H0z" fill="#666"/></svg>
      <svg class="w-[15px] h-[15px]" viewBox="0 0 15 15"><path d="M12.5 0H15v15h-2.5zM0 0v15l12-7.5z" fill="#666"/></svg>
    </div>
    <div class="ml-[31px] flex gap-[10px] -mt-[7px]">
      <svg class="w-5 h-5" viewBox="0 0 20 20"><path d="M1 1h17v17H1Z M5 6h8M5 6v8M5 14c5-1 8-4 8-8" fill="none" stroke="#7d9fc0" stroke-width=".9"/><path d="M11 18l7-7 2 2-7 6h-2z" fill="#f0b45a"/><circle cx="18.5" cy="11" r="2" fill="#e33"/></svg>
      <svg class="w-5 h-5" viewBox="0 0 20 20"><path d="M1 1h17v17H1Z M5 6h8M5 6v8M5 14c5-1 8-4 8-8" fill="none" stroke="#7d9fc0" stroke-width=".9"/><path d="M11 18l7-7 2 2-7 6h-2z" fill="#f0b45a"/><circle cx="18.5" cy="11" r="2" fill="#e33"/></svg>
      <svg class="w-5 h-5" viewBox="0 0 20 20"><path d="M0 4h13v13H0Z" fill="#62a9e2"/><path d="M0 4l4-4h13l-4 4Z" fill="#8ac1ec"/><path d="M13 4l4-4v13l-4 4Z" fill="#3f8fc6"/><path d="M0 17h13v3H0Z" fill="#c4c4c4"/><path d="M19 14V1" stroke="#222"/></svg>
      <svg class="w-5 h-5" viewBox="0 0 20 20"><path d="M0 20V11L8 4l4 9-4 7Z" fill="#e0e0e0"/><path d="M7 4l8 7-4 5-7-7Z" fill="#f1f1f1"/><path d="M1 1C12 1 20 9 20 20" fill="none" stroke="#777"/><path d="M5 9l6-5M7 11l6-5M5 9l6 7M10 13l4-3" stroke="#5ba7e0" stroke-width="1.8"/></svg>
    </div>
    <div class="absolute left-[193px] top-[43px] w-[91px] h-[9px] border-x-[3px] border-b-[3px] border-[#cfcfcf]"></div>
    <div class="absolute left-[221px] top-[43px] w-[3px] h-[8px] bg-[#cfcfcf]"></div>
    <div class="absolute left-[251px] top-[43px] w-[3px] h-[8px] bg-[#cfcfcf]"></div>
    <svg class="absolute left-[290px] top-[12px] w-[15px] h-[41px]" viewBox="0 0 15 41"><path d="M0 0h15v4L9 9v32H6V9L0 4z" fill="#555"/></svg>
    <svg class="absolute right-[13px] top-[17px] w-[25px] h-[25px]" viewBox="0 0 24 24"><use href="#gear"/></svg>
  </footer>
</div>
</body>
</html>
